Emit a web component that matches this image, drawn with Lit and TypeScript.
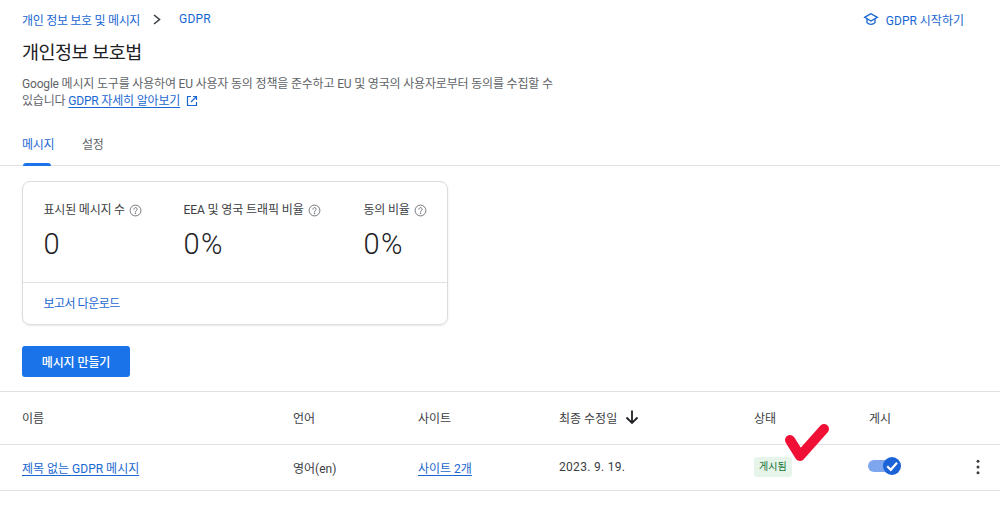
import { LitElement, html, css } from "lit";
import { customElement } from "lit/decorators.js";

const help = html`<svg class="help" viewBox="0 0 24 24" fill="none" stroke="#5f6368" stroke-width="1.600"><circle cx="12" cy="12" r="10"/><path d="M9 9.600a3 3 0 1 1 4.700 2.500c-1 .7-1.700 1.300-1.700 2.600" stroke-linecap="round"/><circle cx="12" cy="17.400" r=".6" fill="#5f6368"/></svg>`;

@customElement("app-root")
export class AppRoot extends LitElement {
  static styles = css`
    :host {
      display: block;
      width: 1000px;
      height: 511px;
      overflow: hidden;
      position: relative;
      background: #fff;
      color: #3c4043;
      font-family: Roboto, "Noto Sans CJK KR", sans-serif;
      font-size: 12px;
    }
    a { color: #1967d2; text-decoration: none; }
    a.u { text-decoration: underline; text-underline-offset: 2px; }
    .top {
      display: flex;
      justify-content: space-between;
      align-items: center;
      height: 20px;
      padding: 9px 36px 0 22px;
    }
    .crumbs { display: flex; align-items: center; }
    .crumbs a:first-child { letter-spacing: -0.3px; }
    .crumbs a:last-child { letter-spacing: 0.2px; }
    .chev { width: 10px; height: 11px; margin: 0 17px 0 12px; }
    .start { display: flex; align-items: center; gap: 7px; }
    .start svg { width: 16px; height: 16px; }
    h1 {
      margin: 11px 0 0 22px;
      font-size: 18.5px;
      line-height: 26px;
      font-weight: 400;
      letter-spacing: -0.5px;
      color: #202124;
    }
    .desc {
      margin: 10px 0 0 22px;
      line-height: 17px;
      font-size: 12px;
      letter-spacing: -0.18px;
      color: #5f6368;
      white-space: nowrap;
    }
    .ext { width: 12px; height: 12px; vertical-align: -2px; margin-left: 6px; }
    .tabs {
      display: flex;
      margin-top: 16px;
      height: 40px;
      border-bottom: 1px solid #e0e0e0;
      padding-left: 22px;
      gap: 31px;
      box-sizing: border-box;
    }
    .tab {
      position: relative;
      line-height: 38px;
      color: #5f6368;
      width: 29px;
      white-space: nowrap;
      letter-spacing: -0.3px;
    }
    .tab.on { color: #1967d2; }
    .tab.on::after {
      content: "";
      position: absolute;
      left: 1px;
      right: 0;
      bottom: -1px;
      height: 3px;
      background: #1a73e8;
      border-radius: 3px 3px 0 0;
    }
    .card {
      margin: 15px 0 0 22px;
      width: 424px;
      height: 142px;
      border: 1px solid #dadce0;
      border-radius: 8px;
      box-shadow: 0 1px 2px rgba(60, 64, 67, 0.12);
      display: flex;
      flex-direction: column;
    }
    .stats {
      flex: 1;
      display: grid;
      grid-template-columns: 140px 180px auto;
      padding: 20px 0 0 20.5px;
      border-bottom: 1px solid #e0e0e0;
    }
    .lbl {
      display: flex;
      align-items: center;
      gap: 4px;
      color: #3c4043;
      line-height: 17px;
      letter-spacing: -0.2px;
    }
    .lbl.wide { letter-spacing: -0.1px; }
    .help { width: 13px; height: 13px; }
    .num {
      margin-top: 7px;
      font-size: 29px;
      line-height: 36px;
      color: #202124;
      font-weight: 300;
      letter-spacing: 1.5px;
    }
    .dl {
      box-sizing: border-box;
      height: 41px;
      padding: 1px 0 0 20.5px;
      line-height: 40px;
      letter-spacing: -0.5px;
    }
    .btn {
      display: flex;
      align-items: center;
      justify-content: center;
      margin: 21px 0 0 22px;
      width: 108px;
      height: 31px;
      background: #1a73e8;
      color: #fff;
      border-radius: 3px;
      font-weight: 500;
      letter-spacing: -0.1px;
    }
    .table {
      margin-top: 14px;
      display: grid;
      grid-template-columns: 271px 125px 141px 195px 115px 101px 1fr;
      padding-left: 22px;
      border-top: 1px solid #e0e0e0;
    }
    .cell { display: flex; align-items: center; color: #3c4043; box-sizing: border-box; }
    .row { height: 45px; padding-bottom: 1px; }
    .h { height: 52px; padding-bottom: 2px; }
    .date { letter-spacing: 0.3px; }
    .rule {
      grid-column: 1 / -1;
      margin-left: -22px;
      height: 1px;
      background: #e0e0e0;
    }
    .arrow { width: 16px; height: 16px; margin-left: 7px; }
    .badge {
      background: #e6f4ea;
      color: #137333;
      font-size: 10px;
      height: 20px;
      line-height: 20px;
      padding: 0 5px;
      border-radius: 3px;
    }
    .toggle { position: relative; width: 32px; height: 16px; margin-top: -2px; }
    .track {
      position: absolute;
      left: -1px;
      top: 2px;
      width: 26px;
      height: 12px;
      border-radius: 6px;
      background: #7ea6ee;
    }
    .knob { position: absolute; right: 0; top: -1px; width: 18px; height: 18px; }
    .more { width: 18px; height: 18px; margin-left: -1px; }
    .mark { position: absolute; left: 783px; top: 420px; width: 48px; height: 44px; pointer-events: none; }
  `;

  render() {
    return html`
      <div class="top">
        <div class="crumbs">
          <a href="#">개인 정보 보호 및 메시지</a>
          <svg class="chev" viewBox="0 0 10 11" fill="none" stroke="#3c4043" stroke-width="1.600"><path d="M2 1 7.500 5.500 2 10"/></svg>
          <a href="#">GDPR</a>
        </div>
        <a class="start" href="#">
          <svg viewBox="0 0 24 24" fill="none" stroke="#1967d2" stroke-width="2"><path d="M12 4 2.500 9.500 12 15l9.500-5.500z"/><path d="M6 12v5.500c1.500 1.600 3.600 2.500 6 2.500s4.500-.9 6-2.500V12"/></svg>
          GDPR 시작하기
        </a>
      </div>
      <h1>개인정보 보호법</h1>
      <div class="desc">
        <div>Google 메시지 도구를 사용하여 EU 사용자 동의 정책을 준수하고 EU 및 영국의 사용자로부터 동의를 수집할 수</div>
        <div><span>있습니다 </span><a class="u" href="#">GDPR 자세히 알아보기</a><svg class="ext" viewBox="0 0 24 24" fill="none" stroke="#1967d2" stroke-width="2.400"><path d="M10 3H3v18h18v-7"/><path d="M14 3h7v7M21 3 10 14"/></svg></div>
      </div>
      <div class="tabs">
        <div class="tab on">메시지</div>
        <div class="tab">설정</div>
      </div>
      <div class="card">
        <div class="stats">
          <div><div class="lbl">표시된 메시지 수 ${help}</div><div class="num">0</div></div>
          <div><div class="lbl wide">EEA 및 영국 트래픽 비율 ${help}</div><div class="num">0%</div></div>
          <div><div class="lbl">동의 비율 ${help}</div><div class="num">0%</div></div>
        </div>
        <div class="dl"><a href="#">보고서 다운로드</a></div>
      </div>
      <div class="btn">메시지 만들기</div>
      <div class="table">
        <div class="cell h">이름</div>
        <div class="cell h">언어</div>
        <div class="cell h">사이트</div>
        <div class="cell h">최종 수정일
          <svg class="arrow" viewBox="0 0 16 16" fill="none" stroke="#202124" stroke-width="1.800"><path d="M8 1.500v12.500M2.500 8.500 8 14l5.500-5.500"/></svg>
        </div>
        <div class="cell h">상태</div>
        <div class="cell h">게시</div>
        <div class="cell h"></div>
        <div class="rule"></div>
        <div class="cell row"><a class="u" href="#">제목 없는 GDPR 메시지</a></div>
        <div class="cell row">영어(en)</div>
        <div class="cell row"><a class="u" href="#">사이트 2개</a></div>
        <div class="cell row date">2023. 9. 19.</div>
        <div class="cell row"><span class="badge">게시됨</span></div>
        <div class="cell row">
          <div class="toggle">
            <div class="track"></div>
            <svg class="knob" viewBox="0 0 18 18"><circle cx="9" cy="9" r="9" fill="#1a62d6"/><path d="M4.200 9.200 7.800 12.800 14 5.800" fill="none" stroke="#fff" stroke-width="2.200"/></svg>
          </div>
        </div>
        <div class="cell row">
          <svg class="more" viewBox="0 0 18 18" fill="#3c4043"><circle cx="9" cy="3.200" r="1.500"/><circle cx="9" cy="9" r="1.500"/><circle cx="9" cy="14.800" r="1.500"/></svg>
        </div>
        <div class="rule"></div>
      </div>
      <svg class="mark" viewBox="0 0 48 44" fill="none" stroke="#f00f35" stroke-width="10" stroke-linecap="round" stroke-linejoin="round"><path d="M7 20 17 36 41 9"/></svg>
    `;
  }
}
